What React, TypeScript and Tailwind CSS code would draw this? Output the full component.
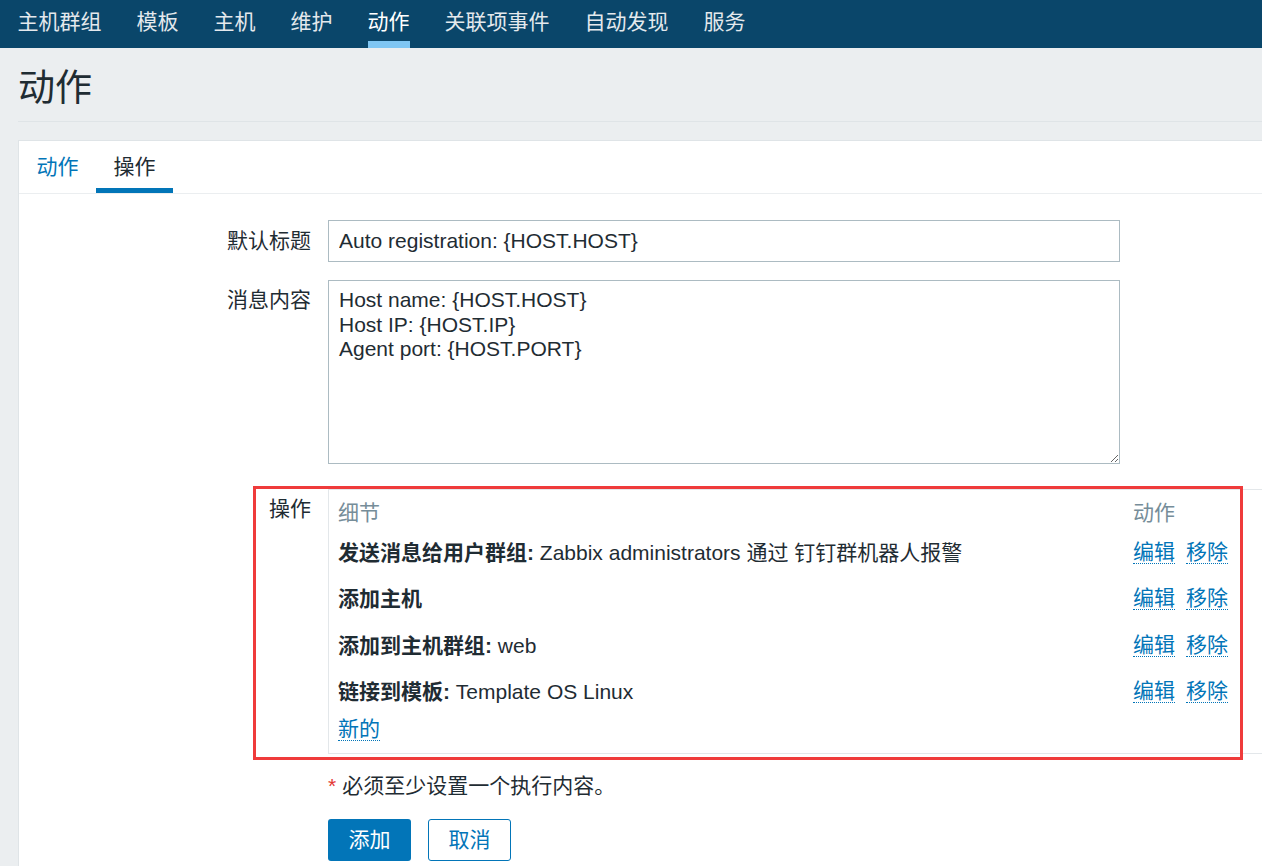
const navItems = ['主机群组', '模板', '主机', '维护', '动作', '关联项事件', '自动发现', '服务']

const operations = [
  { label: '发送消息给用户群组:', value: ' Zabbix administrators 通过 钉钉群机器人报警' },
  { label: '添加主机', value: '' },
  { label: '添加到主机群组:', value: ' web' },
  { label: '链接到模板:', value: ' Template OS Linux' },
]

function DotLink({ children, className = '' }: { children: React.ReactNode; className?: string }) {
  return (
    <span className={`inline-block leading-[22px] text-[#0275b8] border-b border-dotted border-[#0275b8] ${className}`}>
      {children}
    </span>
  )
}

export default function App() {
  return (
    <div className="w-[1262px] h-[866px] overflow-hidden bg-[#ebeef0] text-[21px] text-[#1f2c33] font-['Liberation_Sans','Noto_Sans_CJK_SC',sans-serif]">
      {/* Top navigation */}
      <nav className="h-[48px] bg-[#0a466a] flex">
        {navItems.map((item) => {
          const active = item === '动作'
          return (
            <div key={item} className="px-[17.5px] h-full flex flex-col">
              <span className={`pt-[10px] leading-[24px] ${active ? 'text-white' : 'text-[#e4e9ed]'}`}>{item}</span>
              <span className={`mt-auto h-[7px] w-full ${active ? 'bg-[#7fc6f3]' : ''}`} />
            </div>
          )
        })}
      </nav>

      <div className="w-[1300px] pl-[18px]">
        {/* Page header */}
        <div className="pt-[22px] pb-[13px] border-b border-[#dfe4e7]">
          <h1 className="text-[37px] leading-[38px] text-[#1f2c33]">动作</h1>
        </div>

        {/* Card */}
        <div className="mt-[18px] bg-white border border-[#dfe4e7] h-[760px]">
          {/* Tabs */}
          <div className="h-[53px] border-b border-[#ebeef0] flex">
            <div className="h-[52px] px-[17.5px] flex items-center pt-[5px] border-b-[5px] border-transparent text-[#0275b8]">动作</div>
            <div className="h-[52px] px-[17.5px] flex items-center pt-[5px] border-b-[5px] border-[#0275b8] text-[#1f2c33]">操作</div>
          </div>

          {/* Form */}
          <div className="pt-[26px] grid grid-cols-[292px_1fr] gap-x-[17px]">
            <div className="h-[42px] flex items-center justify-end">默认标题</div>
            <div>
              <input
                defaultValue="Auto registration: {HOST.HOST}"
                className="w-[792px] h-[42px] border border-[#acbbc2] px-[10px] outline-none text-[#1f2c33]"
              />
            </div>

            <div className="mt-[18px] pt-[8px] leading-[24.5px] text-right">消息内容</div>
            <div className="mt-[18px]">
              <textarea
                defaultValue={'Host name: {HOST.HOST}\nHost IP: {HOST.IP}\nAgent port: {HOST.PORT}'}
                className="block w-[792px] h-[184px] border border-[#acbbc2] pt-[7px] px-[10px] leading-[24.5px] outline-none text-[#1f2c33]"
              />
            </div>

            {/* Operations */}
            <div className="col-span-2 mt-[25px] relative grid grid-cols-[292px_1fr] gap-x-[17px]">
              <div className="pt-[8px] leading-[24.5px] text-right">操作</div>
              <div className="w-[960px] border border-[#e3e7ea] pl-[9px] pt-[6px] pb-[10px]">
                <div className="h-[33px] flex items-center text-[#768d99]">
                  <div className="w-[795px]">细节</div>
                  <div>动作</div>
                </div>
                {operations.map((op) => (
                  <div key={op.label} className="h-[46.5px] flex items-center">
                    <div className="w-[795px] whitespace-nowrap">
                      <b className="font-bold">{op.label}</b>
                      {op.value}
                    </div>
                    <div className="flex">
                      <DotLink>编辑</DotLink>
                      <DotLink className="ml-[11px]">移除</DotLink>
                    </div>
                  </div>
                ))}
                <div className="h-[28px] flex items-center">
                  <DotLink>新的</DotLink>
                </div>
              </div>
              {/* annotation box */}
              <div className="absolute left-[234px] top-[-3px] w-[990px] h-[274px] border-[3px] border-[#ef3b3b] pointer-events-none" />
            </div>

            <div />
            <div className="mt-[20px] leading-[24.5px]">
              <span className="text-[#e33734] mr-[6px]">*</span>
              必须至少设置一个执行内容。
            </div>

            <div />
            <div className="mt-[20px] flex gap-[17px]">
              <button className="w-[83px] h-[42px] rounded-[3px] bg-[#0275b8] text-white">添加</button>
              <button className="w-[83px] h-[42px] rounded-[3px] border border-[#0275b8] bg-white text-[#0275b8]">取消</button>
            </div>
          </div>
        </div>
      </div>
    </div>
  )
}
